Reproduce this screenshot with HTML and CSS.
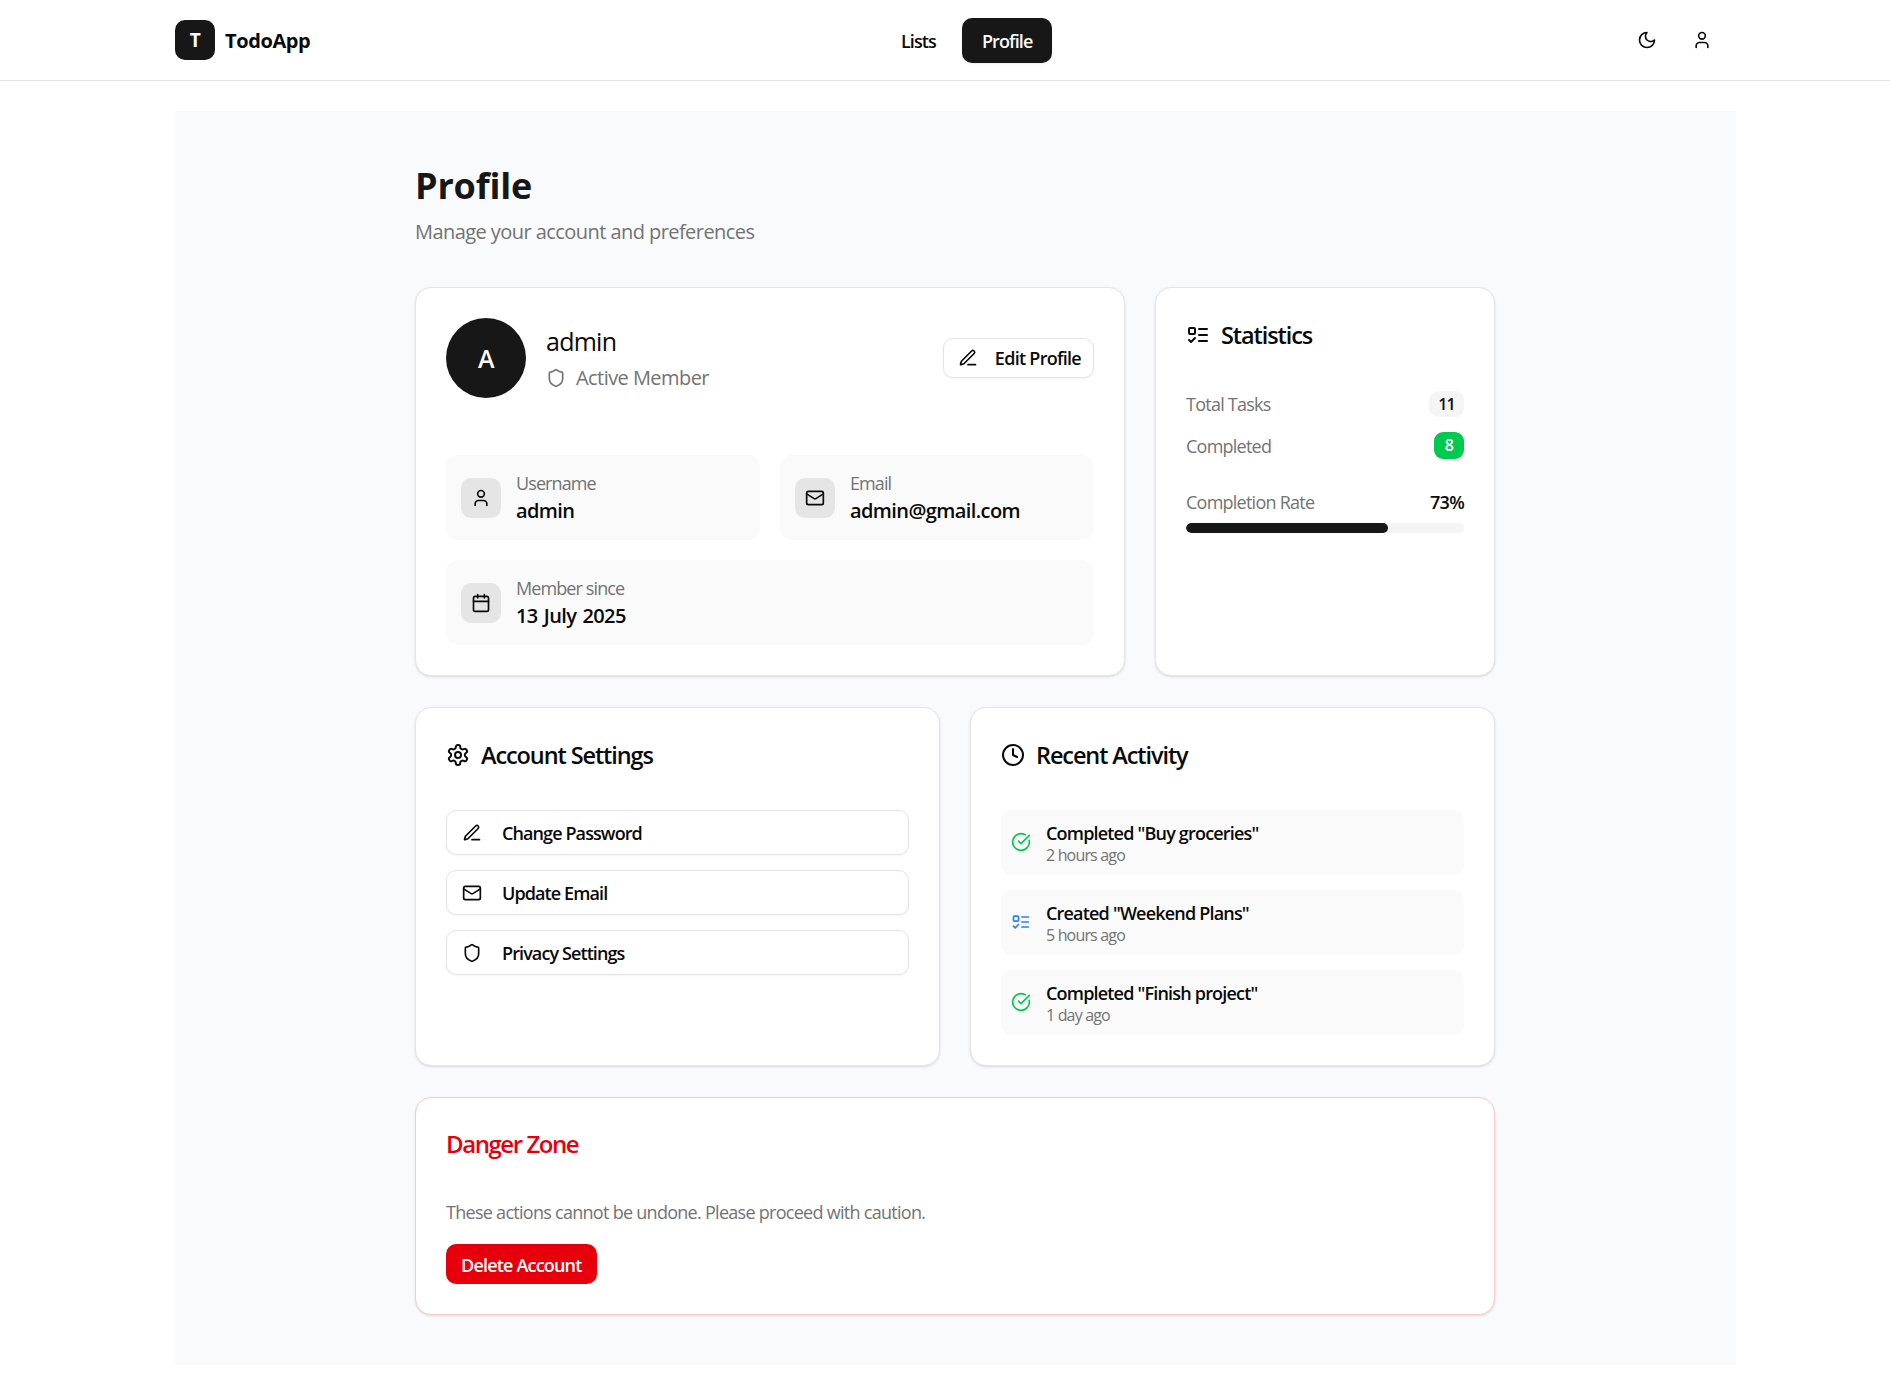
FILE: index.html
```html
<!DOCTYPE html>
<html lang="en">
<head>
<meta charset="utf-8">
<title>Profile - TodoApp</title>
<link rel="stylesheet" href="styles.css">
</head>
<body>
<svg class="sprite" aria-hidden="true">
  <symbol id="i-moon" viewBox="0 0 24 24"><path d="M12 3a6 6 0 0 0 9 9 9 9 0 1 1-9-9Z"/></symbol>
  <symbol id="i-user" viewBox="0 0 24 24"><path d="M19 21v-2a4 4 0 0 0-4-4H9a4 4 0 0 0-4 4v2"/><circle cx="12" cy="7" r="4"/></symbol>
  <symbol id="i-shield" viewBox="0 0 24 24"><path d="M20 13c0 5-3.5 7.5-7.66 8.95a1 1 0 0 1-.67-.01C7.5 20.5 4 18 4 13V6a1 1 0 0 1 1-1c2 0 4.5-1.2 6.24-2.72a1.17 1.17 0 0 1 1.52 0C14.51 3.81 17 5 19 5a1 1 0 0 1 1 1z"/></symbol>
  <symbol id="i-pen" viewBox="0 0 24 24"><path d="M12 20h9"/><path d="M16.376 3.622a1 1 0 0 1 3.002 3.002L7.368 18.635a2 2 0 0 1-.855.506l-2.872.838a.5.5 0 0 1-.62-.62l.838-2.872a2 2 0 0 1 .506-.854z"/></symbol>
  <symbol id="i-mail" viewBox="0 0 24 24"><rect x="2" y="4" width="20" height="16" rx="2"/><path d="m22 7-8.97 5.7a1.94 1.94 0 0 1-2.06 0L2 7"/></symbol>
  <symbol id="i-calendar" viewBox="0 0 24 24"><path d="M8 2v4"/><path d="M16 2v4"/><rect x="3" y="4" width="18" height="18" rx="2"/><path d="M3 10h18"/></symbol>
  <symbol id="i-list" viewBox="0 0 24 24"><rect x="3" y="5" width="6" height="6" rx="1"/><path d="m3 17 2 2 4-4"/><path d="M13 6h8"/><path d="M13 12h8"/><path d="M13 18h8"/></symbol>
  <symbol id="i-gear" viewBox="0 0 24 24"><path d="M12.22 2h-.44a2 2 0 0 0-2 2v.18a2 2 0 0 1-1 1.73l-.43.25a2 2 0 0 1-2 0l-.15-.08a2 2 0 0 0-2.73.73l-.22.38a2 2 0 0 0 .73 2.73l.15.1a2 2 0 0 1 1 1.72v.51a2 2 0 0 1-1 1.74l-.15.09a2 2 0 0 0-.73 2.73l.22.38a2 2 0 0 0 2.73.73l.15-.08a2 2 0 0 1 2 0l.43.25a2 2 0 0 1 1 1.73V20a2 2 0 0 0 2 2h.44a2 2 0 0 0 2-2v-.18a2 2 0 0 1 1-1.73l.43-.25a2 2 0 0 1 2 0l.15.08a2 2 0 0 0 2.73-.73l.22-.39a2 2 0 0 0-.73-2.73l-.15-.08a2 2 0 0 1-1-1.74v-.5a2 2 0 0 1 1-1.74l.15-.09a2 2 0 0 0 .73-2.73l-.22-.38a2 2 0 0 0-2.73-.73l-.15.08a2 2 0 0 1-2 0l-.43-.25a2 2 0 0 1-1-1.73V4a2 2 0 0 0-2-2z"/><circle cx="12" cy="12" r="3"/></symbol>
  <symbol id="i-clock" viewBox="0 0 24 24"><circle cx="12" cy="12" r="10"/><polyline points="12 6 12 12 16 14"/></symbol>
  <symbol id="i-check" viewBox="0 0 24 24"><path d="M21.801 10A10 10 0 1 1 17 3.335"/><path d="m9 11 3 3L22 4"/></symbol>
</svg>

<header class="topbar">
  <a class="brand"><span class="brand-mark">T</span><span class="brand-name">TodoApp</span></a>
  <nav class="nav">
    <a class="nav-link">Lists</a>
    <a class="nav-link is-active">Profile</a>
  </nav>
  <div class="actions">
    <button class="icon-btn"><svg class="ico"><use href="#i-moon"/></svg></button>
    <button class="icon-btn"><svg class="ico"><use href="#i-user"/></svg></button>
  </div>
</header>

<main class="main">
  <div class="content">
    <h1 class="page-title">Profile</h1>
    <p class="page-sub">Manage your account and preferences</p>

    <div class="grid-top">
      <section class="card card-profile">
        <div class="profile-head">
          <div class="avatar">A</div>
          <div class="identity">
            <div class="identity-name">admin</div>
            <div class="identity-role"><svg class="ico"><use href="#i-shield"/></svg><span>Active Member</span></div>
          </div>
          <button class="btn-outline"><svg class="ico"><use href="#i-pen"/></svg><span>Edit Profile</span></button>
        </div>
        <div class="tiles">
          <div class="tile">
            <div class="tile-icon"><svg class="ico"><use href="#i-user"/></svg></div>
            <div><div class="tile-label">Username</div><div class="tile-value">admin</div></div>
          </div>
          <div class="tile">
            <div class="tile-icon"><svg class="ico"><use href="#i-mail"/></svg></div>
            <div><div class="tile-label">Email</div><div class="tile-value">admin@gmail.com</div></div>
          </div>
          <div class="tile tile-wide">
            <div class="tile-icon"><svg class="ico"><use href="#i-calendar"/></svg></div>
            <div><div class="tile-label">Member since</div><div class="tile-value">13 July 2025</div></div>
          </div>
        </div>
      </section>

      <section class="card">
        <h2 class="card-title"><svg class="ico ico-lg"><use href="#i-list"/></svg><span>Statistics</span></h2>
        <div class="stat-row"><span class="stat-label">Total Tasks</span><span class="pill">11</span></div>
        <div class="stat-row stat-row-2"><span class="stat-label">Completed</span><span class="pill pill-green">8</span></div>
        <div class="rate-row"><span class="stat-label">Completion Rate</span><span class="rate-value">73%</span></div>
        <div class="bar"><div class="bar-fill" style="width:72.7%"></div></div>
      </section>
    </div>

    <div class="grid-mid">
      <section class="card">
        <h2 class="card-title"><svg class="ico ico-lg"><use href="#i-gear"/></svg><span>Account Settings</span></h2>
        <div class="stack">
          <button class="row-btn"><svg class="ico"><use href="#i-pen"/></svg><span>Change Password</span></button>
          <button class="row-btn"><svg class="ico"><use href="#i-mail"/></svg><span>Update Email</span></button>
          <button class="row-btn"><svg class="ico"><use href="#i-shield"/></svg><span>Privacy Settings</span></button>
        </div>
      </section>

      <section class="card">
        <h2 class="card-title"><svg class="ico ico-lg"><use href="#i-clock"/></svg><span>Recent Activity</span></h2>
        <div class="stack">
          <div class="activity">
            <svg class="ico ico-green activity-icon"><use href="#i-check"/></svg>
            <div><div class="activity-title">Completed "Buy groceries"</div><div class="activity-time">2 hours ago</div></div>
          </div>
          <div class="activity">
            <svg class="ico ico-blue activity-icon"><use href="#i-list"/></svg>
            <div><div class="activity-title">Created "Weekend Plans"</div><div class="activity-time">5 hours ago</div></div>
          </div>
          <div class="activity">
            <svg class="ico ico-green activity-icon"><use href="#i-check"/></svg>
            <div><div class="activity-title">Completed "Finish project"</div><div class="activity-time">1 day ago</div></div>
          </div>
        </div>
      </section>
    </div>

    <section class="card card-danger">
      <h2 class="danger-title">Danger Zone</h2>
      <p class="danger-text">These actions cannot be undone. Please proceed with caution.</p>
      <button class="btn-danger">Delete Account</button>
    </section>
  </div>
</main>
</body>
</html>
```

FILE: styles.css
```css
* { box-sizing: border-box; }
html, body { margin: 0; padding: 0; }
body {
  background: #fff;
  color: #0a0a0a;
  font-family: "Open Sans", "Noto Sans", "Liberation Sans", sans-serif;
  font-size: 18px;
  letter-spacing: -0.04em;
  min-height: 1394px;
}
.sprite { display: none; }
.ico {
  width: 20px; height: 20px; flex: none;
  fill: none; stroke: currentColor; stroke-width: 2;
  stroke-linecap: round; stroke-linejoin: round;
}
.ico-lg { width: 24px; height: 24px; }
.ico-green { color: #00c950; }
.ico-blue { color: #2b7fff; }
button { font: inherit; letter-spacing: inherit; color: inherit; cursor: pointer; }

.topbar {
  height: 81px;
  border-bottom: 1px solid #e5e5e5;
  padding: 0 154px 0 175px;
  display: flex; align-items: center; justify-content: space-between;
}
.brand { display: flex; align-items: center; gap: 10px; }
.brand-mark {
  width: 40px; height: 40px; border-radius: 10px;
  background: #171717; color: #fafafa;
  display: flex; align-items: center; justify-content: center;
  font-weight: 700; font-size: 19px;
}
.brand-name { font-size: 20px; font-weight: 700; letter-spacing: -0.02em; }
.nav { display: flex; align-items: center; gap: 6px; margin-left: -4px; }
.nav-link { padding: 0 20px; height: 45px; line-height: 46px; border-radius: 10px; font-weight: 550; letter-spacing: -0.05em; }
.nav-link.is-active { background: #171717; color: #fafafa; box-shadow: 0 1px 2px rgba(0,0,0,.08); }
.actions { display: flex; gap: 15px; padding-right: 14px; }
.icon-btn {
  width: 40px; height: 40px; border: 0; background: none; padding: 0;
  display: flex; align-items: center; justify-content: center;
}

.main {
  margin: 30px 154px 0 175px;
  height: 1254px;
  background: #f9fafb;
  padding-top: 51px;
}
.content { width: 1080px; margin-left: 240px; }
.page-title { margin: 0; font-size: 36px; line-height: 48px; font-weight: 700; color: #171717; letter-spacing: -0.005em; }
.page-sub { margin: 8px 0 0; font-size: 20px; line-height: 28px; color: #737373; letter-spacing: -0.028em; }

.grid-top { display: grid; grid-template-columns: repeat(3, minmax(0, 1fr)); gap: 31px 30px; margin-top: 41px; }
.card-profile { grid-column: span 2; }
.grid-mid { display: grid; grid-template-columns: repeat(2, minmax(0, 1fr)); gap: 31px 30px; margin-top: 31px; }

.card {
  background: #fff;
  border: 1px solid #e5e5e5;
  border-radius: 16px;
  padding: 30px;
  box-shadow: 0 1px 3px rgba(0,0,0,.1), 0 1px 2px -1px rgba(0,0,0,.1);
}
.card-title {
  margin: 0; display: flex; align-items: center; gap: 11px;
  font-size: 23.5px; line-height: 34px; font-weight: 550; letter-spacing: -0.047em;
}

.profile-head { display: flex; align-items: center; gap: 20px; }
.avatar {
  width: 80px; height: 80px; border-radius: 50%; flex: none;
  background: #171717; color: #fafafa;
  display: flex; align-items: center; justify-content: center;
  font-size: 25px; font-weight: 600;
}
.identity { flex: 1; }
.identity-name { font-size: 25px; line-height: 34px; font-weight: 500; letter-spacing: -0.03em; }
.identity-role { display: flex; align-items: center; gap: 10px; font-size: 20px; line-height: 28px; color: #737373; margin-top: 6px; letter-spacing: -0.028em; }
.btn-outline {
  display: flex; align-items: center; gap: 17px;
  height: 40px; padding: 0 12px 0 14px;
  background: #fff; border: 1px solid #e5e5e5; border-radius: 10px;
  font-weight: 550; letter-spacing: -0.04em; box-shadow: 0 1px 2px rgba(0,0,0,.05);
}

.tiles { display: grid; grid-template-columns: 1fr 1fr; gap: 20px; margin-top: 57px; }
.tile { display: flex; align-items: center; gap: 15px; height: 85px; padding: 0 15px; background: #fafafa; border-radius: 12px; }
.tile-wide { grid-column: span 2; }
.tile-icon { width: 40px; height: 40px; border-radius: 10px; background: #e5e5e5; display: flex; align-items: center; justify-content: center; }
.tile-label { font-size: 18px; line-height: 24px; margin-top: 2px; color: #737373; letter-spacing: -0.05em; }
.tile-value { font-size: 20px; line-height: 30px; margin-top: 1px; font-weight: 550; letter-spacing: -0.03em; word-spacing: 1.5px; }

.stat-row { display: flex; align-items: center; justify-content: space-between; margin-top: 38px; height: 27px; }
.stat-row-2 { margin-top: 15px; }
.stat-label { color: #737373; letter-spacing: -0.042em; }
.pill { min-width: 30px; padding: 0 9px; height: 26px; line-height: 26px; text-align: center; border-radius: 9px; background: #f5f5f5; font-size: 16px; font-weight: 550; }
.pill-green { background: #00c950; color: #fff; height: 27px; line-height: 27px; font-weight: 600; }
.rate-row { display: flex; align-items: center; justify-content: space-between; margin-top: 30px; line-height: 26px; }
.rate-value { font-weight: 550; letter-spacing: -0.04em; }
.bar { height: 10px; border-radius: 5px; background: #f5f5f5; margin-top: 8px; overflow: hidden; }
.bar-fill { height: 100%; border-radius: 5px; background: #171717; }

.stack { display: flex; flex-direction: column; gap: 15px; margin-top: 38px; }
.row-btn {
  display: flex; align-items: center; gap: 20px;
  height: 45px; padding: 0 15px; width: 100%; text-align: left;
  background: #fff; border: 1px solid #e5e5e5; border-radius: 10px;
  font-weight: 550; letter-spacing: -0.05em; box-shadow: 0 1px 2px rgba(0,0,0,.05);
}
.activity { display: flex; align-items: center; gap: 15px; height: 65px; padding: 0 10px; background: #fafafa; border-radius: 10px; }
.activity-icon { margin-top: -2px; }
.activity-title { font-weight: 550; line-height: 24px; margin-top: 1px; letter-spacing: -0.045em; }
.activity-time { font-size: 16px; line-height: 21px; color: #737373; letter-spacing: -0.052em; }

.card-danger { margin-top: 31px; height: 218px; border-color: #ffc9c9; padding-top: 29px; }
.danger-title { margin: 0; font-size: 24px; line-height: 34px; font-weight: 550; color: #e7000b; letter-spacing: -0.06em; }
.danger-text { margin: 37px 0 0; line-height: 28px; color: #737373; }
.btn-danger { display: block; margin-top: 18px; height: 40px; padding: 1px 15px 0; background: #e7000b; color: #fff; border: 0; border-radius: 10px; font-weight: 600; letter-spacing: -0.045em; }
```
